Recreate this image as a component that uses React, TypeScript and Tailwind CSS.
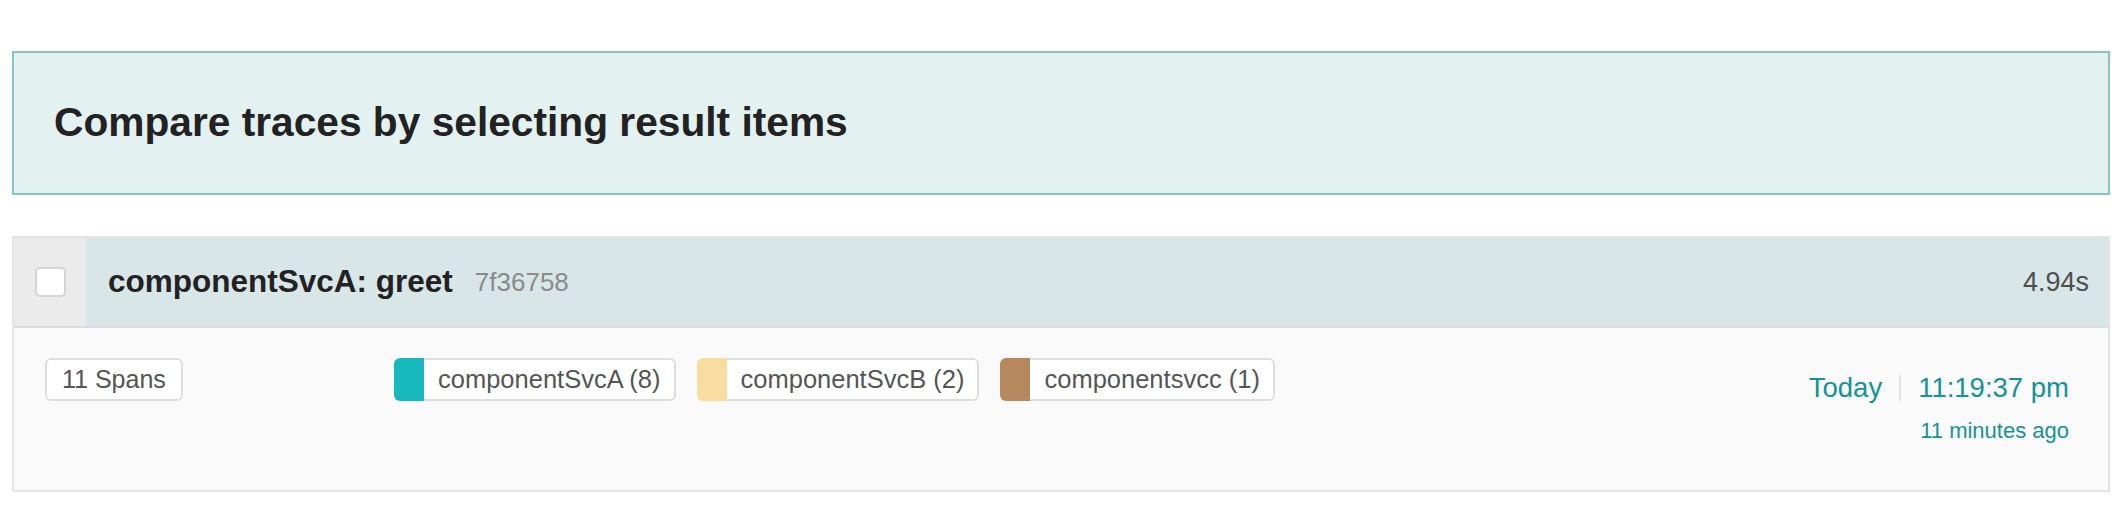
const services = [
  { name: "componentSvcA", count: 8, color: "bg-[#17b8be]" },
  { name: "componentSvcB", count: 2, color: "bg-[#f8dca1]" },
  { name: "componentsvcc", count: 1, color: "bg-[#b7885e]" },
];

const ServiceTag = ({ name, count, color }: { name: string; count: number; color: string }) => {
  return (
    <div className="flex h-[43px]">
      <div className={`w-[30px] rounded-l-[6px] ${color}`} />
      <div className="flex items-center rounded-r-[6px] border-2 border-l-0 border-[#dedede] bg-white pl-[14px] pr-[13px] text-[25.5px] text-[#555]">
        {`${name} (${count})`}
      </div>
    </div>
  );
};

const App = () => {
  return (
    <div
      className="w-[2120px] h-[522px] bg-white pt-[51px]"
      style={{ fontFamily: '"Liberation Sans", Arial, sans-serif' }}
    >
      <div className="ml-[12px] w-[2098px] h-[144px] flex items-center border-2 border-[#86c5c3] bg-[#e3f1f1] pl-[40px]">
        <h2 className="text-[40.7px] font-bold text-[#222]">Compare traces by selecting result items</h2>
      </div>

      <div className="ml-[12px] mt-[41px] w-[2098px] border-2 border-[#e4e4e4]">
        <div className="flex h-[90px] border-b-2 border-[#dcdcdc]">
          <div className="w-[72px] flex items-center justify-center bg-[#ebebeb]">
            <span className="block w-[31px] h-[30px] rounded-[5px] border-2 border-[#d4d4d4] bg-white" />
          </div>
          <div className="flex-1 flex items-center bg-[#d8e6e8] pl-[22px] pr-[19px]">
            <span className="text-[31.5px] font-bold text-[#222]">componentSvcA: greet</span>
            <span className="ml-[22px] text-[26px] text-[#8a8a8a]">7f36758</span>
            <span className="ml-auto text-[27px] text-[#4f4f4f]">4.94s</span>
          </div>
        </div>

        <div className="h-[162px] flex bg-[#fafafa] pt-[30px] pl-[31px] pr-[39px]">
          <div className="w-[349px]">
            <div className="inline-flex h-[43px] items-center rounded-[6px] border-2 border-[#dedede] bg-white px-[15px] text-[25px] text-[#555]">
              11 Spans
            </div>
          </div>
          <div className="flex items-start gap-[21px]">
            {services.map((s) => (
              <ServiceTag key={s.name} {...s} />
            ))}
          </div>
          <div className="ml-auto mt-[12px] flex flex-col items-end text-[#14929a]">
            <div className="flex items-center leading-[36px] text-[27.5px]">
              <span>Today</span>
              <span className="mx-[17px] block w-[2px] h-[26px] bg-[#e2e2e2]" />
              <span>11:19:37 pm</span>
            </div>
            <div className="mt-[10px] leading-[30px] text-[22px]">11 minutes ago</div>
          </div>
        </div>
      </div>
    </div>
  );
};

export default App;
